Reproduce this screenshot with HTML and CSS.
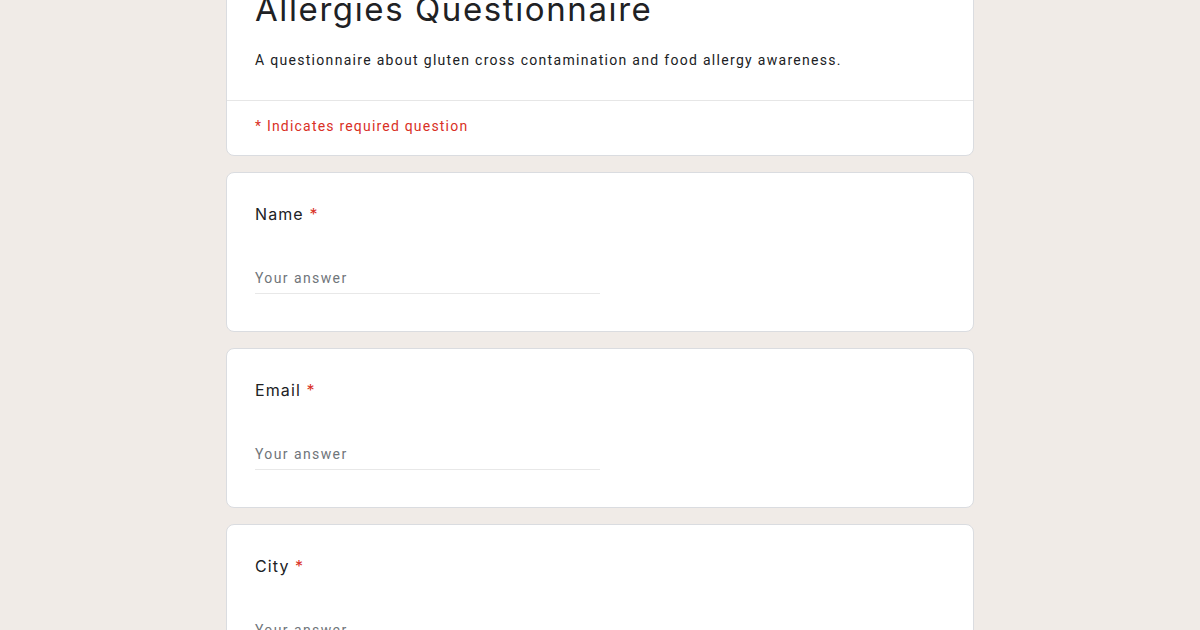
FILE: index.html
```html
<!DOCTYPE html>
<html lang="en">
<head>
<meta charset="utf-8">
<title>Allergies Questionnaire</title>
<link rel="stylesheet" href="styles.css">
</head>
<body>
<main class="page">
  <section class="card header-card">
    <div class="header">
      <h1 class="form-title">Allergies Questionnaire</h1>
      <p class="form-desc">A questionnaire about gluten cross contamination and food allergy awareness.</p>
    </div>
    <div class="required-note">* Indicates required question</div>
  </section>

  <section class="card question">
    <div class="q-title">Name <span class="star">*</span></div>
    <div class="answer">Your answer</div>
  </section>

  <section class="card question">
    <div class="q-title">Email <span class="star">*</span></div>
    <div class="answer">Your answer</div>
  </section>

  <section class="card question">
    <div class="q-title">City <span class="star">*</span></div>
    <div class="answer">Your answer</div>
  </section>
</main>
</body>
</html>
```

FILE: styles.css
```css
html, body {
  margin: 0;
  padding: 0;
}
body {
  background: #f0ebe7;
  font-family: Roboto, "Liberation Sans", Arial, sans-serif;
  color: #202124;
  overflow: hidden;
}
.page {
  width: 748px;
  margin: -31px auto 0;
  display: flex;
  flex-direction: column;
  gap: 16px;
}
.card {
  background: #ffffff;
  border: 1px solid #dadce0;
  border-radius: 8px;
}
.header {
  padding: 19px 28px 30px 28px;
}
.form-title {
  margin: 0;
  font-family: Inter, "Open Sans", sans-serif;
  font-weight: 400;
  font-size: 33px;
  line-height: 40px;
  letter-spacing: 1.6px;
  color: #202124;
}
.form-desc {
  margin: 21px 0 0;
  font-size: 14px;
  line-height: 20px;
  letter-spacing: 1.3px;
  color: #202124;
}
.required-note {
  border-top: 1px solid #e6e6e6;
  padding: 13px 28px 17px;
  font-size: 14px;
  line-height: 24px;
  letter-spacing: 1.2px;
  color: #d93025;
}
.question {
  padding: 29px 28px 37px;
}
.q-title {
  font-family: Inter, "Open Sans", sans-serif;
  font-size: 16px;
  line-height: 24px;
  letter-spacing: 1.1px;
  color: #202124;
}
.star {
  color: #d93025;
}
.answer {
  margin-top: 42px;
  width: 345px;
  font-size: 14px;
  line-height: 20px;
  letter-spacing: 1.4px;
  color: #70757a;
  padding-bottom: 5px;
  border-bottom: 1px solid #e8e8e8;
}
```
